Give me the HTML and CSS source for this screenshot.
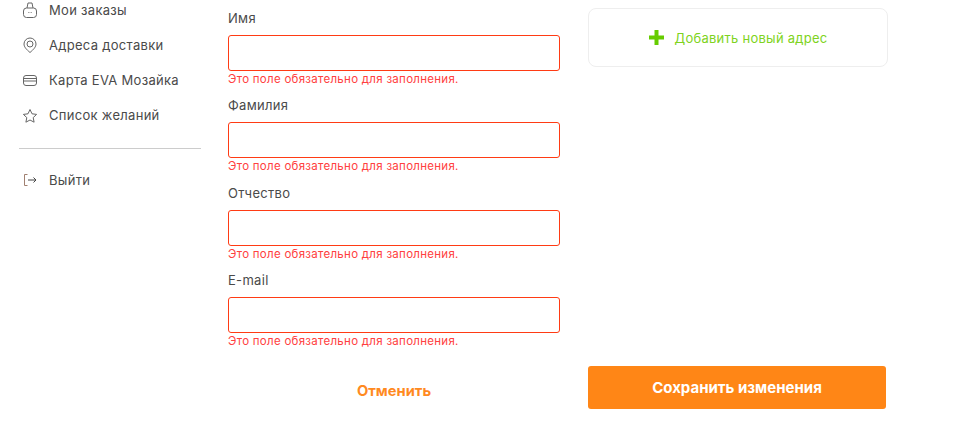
FILE: index.html
```html
<!DOCTYPE html>
<html lang="ru">
<head>
  <meta charset="UTF-8" />
  <title>Личный кабинет</title>
  <link rel="stylesheet" href="styles.css">
</head>
<body>
  <div class="page">
    <div class="sidebar">
      <a class="nav-item">
        <svg class="nav-icon" viewBox="0 0 16 16"><rect x="1.500" y="6" width="13" height="9.500" rx="3"/><path d="M5 6l1-5h4l1 5M6 10.500h.6M7.700 10.500h.6M9.400 10.500h.6"/></svg>
        <span>Мои заказы</span>
      </a>
      <a class="nav-item">
        <svg class="nav-icon" viewBox="0 0 16 16"><path d="M8 15.500C4.500 12.500 2 10 2 7a6 6 0 0 1 12 0c0 3-2.500 5.500-6 8.500z"/><circle cx="8" cy="7" r="3"/></svg>
        <span>Адреса доставки</span>
      </a>
      <a class="nav-item">
        <svg class="nav-icon" viewBox="0 0 16 16"><rect x="1.500" y="3.500" width="13" height="10" rx="2.500"/><path d="M1.500 6.500h13M1.500 9h13"/></svg>
        <span>Карта EVA Мозайка</span>
      </a>
      <a class="nav-item">
        <svg class="nav-icon star-icon" viewBox="0 0 16 16"><path d="M8 1.500l2 4.300 4.600.6-3.400 3.200.9 4.600L8 12l-4.100 2.200.9-4.600-3.400-3.200L6 5.800z"/></svg>
        <span>Список желаний</span>
      </a>
      <div class="divider"></div>
      <a class="nav-item">
        <svg class="nav-icon exit-icon" viewBox="0 0 16 16"><path d="M5.500 2.500h-3v11h3"/><path class="exit-arrow" d="M6 8h8M11.500 5.500L14 8l-2.500 2.500"/></svg>
        <span>Выйти</span>
      </a>
    </div>

    <div class="form-col">
      <div class="field">
        <label class="field-label">Имя</label>
        <input class="field-input" type="text">
        <div class="field-error">Это поле обязательно для заполнения.</div>
      </div>
      <div class="field">
        <label class="field-label">Фамилия</label>
        <input class="field-input" type="text">
        <div class="field-error">Это поле обязательно для заполнения.</div>
      </div>
      <div class="field">
        <label class="field-label">Отчество</label>
        <input class="field-input" type="text">
        <div class="field-error">Это поле обязательно для заполнения.</div>
      </div>
      <div class="field">
        <label class="field-label">E-mail</label>
        <input class="field-input" type="text">
        <div class="field-error">Это поле обязательно для заполнения.</div>
      </div>
      <button class="cancel-btn">Отменить</button>
    </div>

    <div class="side-col">
      <div class="add-address">
        <svg class="plus-icon" viewBox="0 0 15 15"><path d="M5.500 0h4v5.500H15v4H9.500V15h-4V9.500H0v-4h5.500z"/></svg>
        <span>Добавить новый адрес</span>
      </div>
      <button class="save-btn">Сохранить изменения</button>
    </div>
  </div>
</body>
</html>
```

FILE: styles.css
```css
body {
  margin: 0;
  font-family: Inter, "Open Sans", sans-serif;
  background-color: white;
  color: #4a4a4a;
}

.page {
  display: flex;
  height: 435px;
  overflow: hidden;
}

.sidebar {
  width: 182px;
  margin-left: 19px;
  margin-right: 27px;
  display: flex;
  flex-direction: column;
  gap: 15px;
}

.nav-item {
  display: flex;
  align-items: center;
  height: 20px;
  padding-left: 3px;
  font-size: 13px;
  letter-spacing: 0.3px;
  color: #4a4a4a;
}

.nav-icon {
  width: 16px;
  height: 16px;
  margin-right: 11px;
  fill: none;
  stroke: #666;
  stroke-width: 1;
}

.star-icon {
  transform: translateY(1px);
}

.exit-icon {
  stroke: #a08070;
}

.exit-arrow {
  stroke: #444;
}

.divider {
  height: 1px;
  margin-top: 8px;
  margin-bottom: 6px;
  background-color: #ccc;
}

.form-col {
  width: 332px;
  padding-top: 8.9px;
  margin-right: 28px;
}

.field {
  height: 87.5px;
}

.field-label {
  display: block;
  height: 18px;
  margin-bottom: 8px;
  font-size: 13px;
  line-height: 18px;
  letter-spacing: 0.3px;
  color: #4a4a4a;
}

.field-input {
  display: block;
  box-sizing: border-box;
  width: 100%;
  height: 36px;
  border: 1px solid #ff3b14;
  border-radius: 3px;
  background-color: white;
  outline: none;
}

.field-error {
  font-size: 11.5px;
  line-height: 16px;
  letter-spacing: 0.28px;
  color: #ff4040;
}

.cancel-btn {
  display: block;
  width: 332px;
  margin-top: 20px;
  padding: 0;
  border: none;
  background: none;
  font-family: inherit;
  font-size: 14.7px;
  font-weight: 700;
  line-height: 24px;
  color: #ff8a1f;
}

.side-col {
  width: 300px;
  display: flex;
  flex-direction: column;
}

.add-address {
  box-sizing: border-box;
  height: 59px;
  margin-top: 8px;
  display: flex;
  align-items: center;
  justify-content: center;
  gap: 11px;
  border: 1px solid #eee;
  border-radius: 8px;
  font-size: 13px;
  letter-spacing: 0.25px;
  color: #7ed321;
}

.plus-icon {
  width: 15px;
  height: 15px;
  fill: #66cc00;
}

.save-btn {
  width: 298px;
  height: 43px;
  margin-top: 299px;
  border: none;
  border-radius: 3px;
  background-color: #ff8616;
  font-family: inherit;
  font-size: 15px;
  font-weight: 700;
  color: white;
}
```
